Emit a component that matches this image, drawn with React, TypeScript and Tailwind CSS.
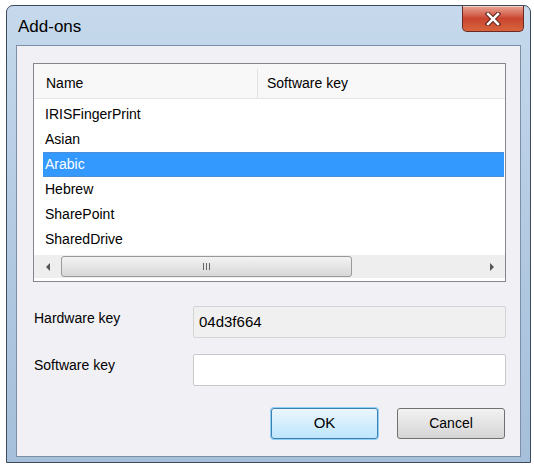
import React from 'react';

const rows = ['IRISFingerPrint', 'Asian', 'Arabic', 'Hebrew', 'SharePoint', 'SharedDrive'];

const font = { fontFamily: '"Liberation Sans", Arial, sans-serif' };

/**
 * Vista-style close button on the title bar
 */
const CloseButton = () => (
  <div className="absolute right-[6px] top-0 flex h-[26px] w-[62px] items-center justify-center rounded-b-[5px] border border-t-0 border-[#6d2a22] bg-gradient-to-b from-[#e9a597] via-[#c9452f] to-[#d8643d] shadow-[inset_0_1px_0_rgba(255,255,255,0.5)]">
    <svg width="16" height="14" viewBox="0 0 16 14">
      <path d="M3 2 L13 12 M13 2 L3 12" stroke="#5a1f18" strokeWidth="4.5" strokeLinecap="square" />
      <path d="M3 2 L13 12 M13 2 L3 12" stroke="#ffffff" strokeWidth="2.5" strokeLinecap="square" />
    </svg>
  </div>
);

/**
 * Horizontal scroll bar below the list rows
 */
const ScrollBar = () => (
  <div className="mt-[3px] flex h-[23px] items-center bg-[#eeeeee]">
    <div className="flex h-full w-[27px] items-center justify-center">
      <svg width="6" height="8" viewBox="0 0 6 8">
        <path d="M5 0 L1 4 L5 8 Z" fill="#555" />
      </svg>
    </div>
    <div className="flex h-[21px] w-[291px] items-center justify-center rounded-[3px] border border-[#9a9a9a] bg-gradient-to-b from-[#f3f3f3] to-[#d8d8d8]">
      <div className="flex gap-[2px]">
        <div className="h-[7px] w-px bg-[#666]" />
        <div className="h-[7px] w-px bg-[#666]" />
        <div className="h-[7px] w-px bg-[#666]" />
      </div>
    </div>
    <div className="flex-1" />
    <div className="flex h-full w-[27px] items-center justify-center">
      <svg width="6" height="8" viewBox="0 0 6 8">
        <path d="M1 0 L5 4 L1 8 Z" fill="#555" />
      </svg>
    </div>
  </div>
);

export default function App() {
  return (
    <div className="h-[467px] w-[534px] overflow-hidden bg-white pl-[6px] pt-[5px]" style={font}>
      <div className="relative flex h-[458px] w-[525px] flex-col rounded-t-[7px] border border-[#3d4a5a] bg-gradient-to-b from-[#c6d9ec] via-[#b3cae2] to-[#a6bfda] px-[9px] pb-[5px]">
        {/* Title bar */}
        <div className="flex h-[39px] shrink-0 items-center pl-[2px] pt-[3px]">
          <span className="text-[17px] text-black">Add-ons</span>
        </div>
        <CloseButton />

        {/* Client area */}
        <div className="flex flex-1 flex-col border border-[#7d8fa6] bg-[#f1f0f4] pl-[16px] pr-[14px] pt-[17px]">
          <div className="flex h-[219px] flex-col border border-[#828790] bg-white">
            <div className="flex h-[35px] border-b border-[#e5e5e5] bg-[#f8f8f8] pt-[5px] text-[14px] text-black">
              <div className="flex w-[224px] items-center border-r border-[#e3e3e3] pl-[12px]">Name</div>
              <div className="flex items-center pl-[9px]">Software key</div>
            </div>
            <div className="mt-[3px] flex flex-col">
              {rows.map((r) => (
                <div
                  key={r}
                  className={
                    r === 'Arabic'
                      ? 'ml-[9px] mr-[1px] flex h-[25px] items-center border-y border-[#4a8fd8] bg-[#3399ff] pl-[2px] text-[14px] text-white'
                      : 'ml-[9px] flex h-[25px] items-center pl-[2px] text-[14px] text-black'
                  }>
                  {r}
                </div>
              ))}
            </div>
            <ScrollBar />
          </div>

          <div className="mt-[24px] flex h-[32px] items-center">
            <div className="w-[160px] pb-[8px] pl-[1px] text-[14px] text-black">Hardware key</div>
            <div className="flex h-full flex-1 items-center rounded-[2px] border border-[#d4d4d4] bg-[#f0f0f0] pl-[5px] text-[15px] text-black">
              04d3f664
            </div>
          </div>

          <div className="mt-[16px] flex h-[32px] items-center">
            <div className="w-[160px] pb-[10px] pl-[1px] text-[14px] text-black">Software key</div>
            <div className="h-full flex-1 rounded-[2px] border border-[#c9c9c9] bg-white" />
          </div>

          <div className="mt-[22px] flex justify-end gap-[19px] pr-[1px]">
            <div className="flex h-[31px] w-[107px] items-center justify-center rounded-[3px] border border-[#3c7fb1] bg-gradient-to-b from-[#eaf6fd] to-[#bee6fd] text-[15px] text-black shadow-[0_0_0_1px_#8fd0f5]">
              OK
            </div>
            <div className="flex h-[31px] w-[108px] items-center justify-center rounded-[3px] border border-[#707070] bg-gradient-to-b from-[#f2f2f2] to-[#d5d5d5] text-[14px] text-black">
              Cancel
            </div>
          </div>
        </div>
      </div>
    </div>
  );
}
